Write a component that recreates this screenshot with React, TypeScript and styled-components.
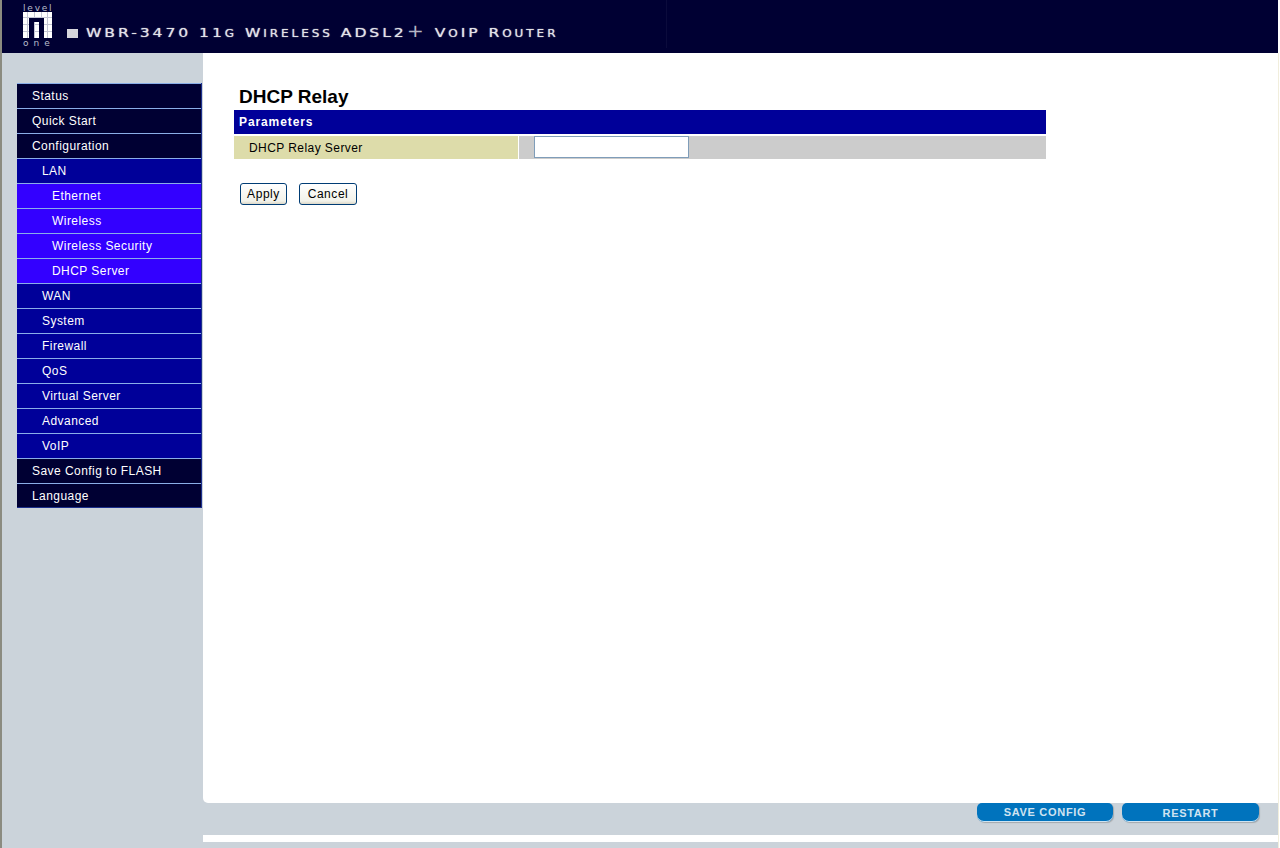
import React from 'react';
import styled, { createGlobalStyle } from 'styled-components';

const menu: { label: string; level: number }[] = [
  { label: 'Status', level: 0 },
  { label: 'Quick Start', level: 0 },
  { label: 'Configuration', level: 0 },
  { label: 'LAN', level: 1 },
  { label: 'Ethernet', level: 2 },
  { label: 'Wireless', level: 2 },
  { label: 'Wireless Security', level: 2 },
  { label: 'DHCP Server', level: 2 },
  { label: 'WAN', level: 1 },
  { label: 'System', level: 1 },
  { label: 'Firewall', level: 1 },
  { label: 'QoS', level: 1 },
  { label: 'Virtual Server', level: 1 },
  { label: 'Advanced', level: 1 },
  { label: 'VoIP', level: 1 },
  { label: 'Save Config to FLASH', level: 0 },
  { label: 'Language', level: 0 },
];

const Logo = () => (
  <LogoBox>
    <LogoWord $spacing={1.8}>level</LogoWord>
    <svg width="29" height="26" viewBox="0 0 29 26">
      <rect width="29" height="26" fill="#fff" />
      <path d="M0 5.5H29M0 12.5H29M0 19.5H29M4.5 0V26M11.5 0V26M18.5 0V26M24.5 0V26" stroke="#c4c6d4" strokeWidth="1" />
      <path d="M6 26V6H21V26H16V10H11V26Z" fill="#000033" />
    </svg>
    <LogoWord $spacing={5}>one</LogoWord>
  </LogoBox>
);

const App = () => {
  return (
    <>
      <GlobalStyle />
      <Page>
        <Header>
          <Logo />
          <Bullet />
          <Title>
            WBR-3470 11<small>G</small> W<small>IRELESS</small> ADSL2<Plus>+</Plus> V<small>O</small>IP R<small>OUTER</small>
          </Title>
        </Header>
        <Body>
          <Sidebar>
            <Menu>
              {menu.map((item) => (
                <MenuItem key={item.label} $level={item.level}>
                  {item.label}
                </MenuItem>
              ))}
            </Menu>
          </Sidebar>
          <Main>
            <Content>
              <Heading>DHCP Relay</Heading>
              <Table>
                <TableHead>Parameters</TableHead>
                <Row>
                  <Label>DHCP Relay Server</Label>
                  <Value>
                    <Input type="text" />
                  </Value>
                </Row>
              </Table>
              <Buttons>
                <Button type="button" $width={47}>Apply</Button>
                <Button type="button" $width={58}>Cancel</Button>
              </Buttons>
            </Content>
            <ActionBar>
              <PillButton $width={136}>SAVE CONFIG</PillButton>
              <PillButton $width={137} $low>RESTART</PillButton>
            </ActionBar>
            <WhiteStrip />
          </Main>
        </Body>
      </Page>
    </>
  );
};

export default App;

const GlobalStyle = createGlobalStyle`
  html, body {
    margin: 0;
    height: 100%;
    overflow: hidden;
    background: #fff;
  }
  #root {
    height: 100%;
  }
`;

const Page = styled.div`
  box-sizing: border-box;
  height: 848px;
  width: 1280px;
  border-left: 2px solid #8b8b80;
  border-right: 1px solid #fff;
  display: flex;
  flex-direction: column;
  font-family: 'Liberation Sans', Arial, sans-serif;
`;

const Header = styled.header`
  flex: 0 0 53px;
  position: relative;
  margin-right: 1px;
  background: #000033;
  display: flex;
  align-items: flex-end;
  padding-left: 21px;
  /* faint seam in the banner image */
  &::after {
    content: '';
    position: absolute;
    left: 664px;
    top: 0;
    bottom: 5px;
    width: 1px;
    background: #0b0b3c;
  }
`;

const LogoBox = styled.div`
  width: 29px;
  margin-bottom: 6px;
  display: flex;
  flex-direction: column;
  svg {
    display: block;
    flex: none;
  }
`;

const LogoWord = styled.span<{ $spacing: number }>`
  font-family: 'DejaVu Sans', sans-serif;
  font-size: 9px;
  line-height: 9px;
  height: 8px;
  letter-spacing: ${({ $spacing }) => $spacing}px;
  color: #b9bccb;
  white-space: nowrap;
  &:last-child {
    height: 9px;
    line-height: 11px;
  }
`;

const Bullet = styled.span`
  width: 11px;
  height: 9px;
  background: #d6d6dc;
  margin: 0 8px 15px 15px;
`;

const Title = styled.h1`
  margin: 0 0 12px;
  font-family: 'DejaVu Sans', sans-serif;
  font-size: 13px;
  line-height: 14px;
  font-weight: 400;
  letter-spacing: 2.45px;
  color: #e2e2e8;
  white-space: nowrap;
  transform: scaleX(1.2);
  transform-origin: left center;
  text-shadow: 0 0 1px #c8c8d4;
  small {
    font-size: 10px;
  }
`;

const Plus = styled.span`
  font-size: 17px;
  line-height: 12px;
  font-weight: 400;
  text-shadow: none;
  color: #b4b4c4;
`;

const Body = styled.div`
  flex: 1;
  display: flex;
  min-height: 0;
  background: #cbd3da;
  border-right: 1px solid #f1eedc;
`;

const Sidebar = styled.nav`
  flex: 0 0 201px;
  padding: 30px 1px 0 15px;
  box-sizing: border-box;
`;

const Menu = styled.div`
  display: flex;
  flex-direction: column;
  border-right: 1px solid #1c2f8c;
`;

const menuColors = ['#000033', '#000099', '#3300ff'];

const MenuItem = styled.a<{ $level: number }>`
  box-sizing: border-box;
  height: 25px;
  border-top: 1px solid #8aaee8;
  background: ${({ $level }) => menuColors[$level]};
  color: #fff;
  font-size: 12px;
  line-height: 24px;
  letter-spacing: 0.45px;
  padding-left: ${({ $level }) => 15 + $level * 10}px;
  white-space: nowrap;
  &:last-child {
    box-shadow: inset 0 -1px 0 #1c2f8c;
  }
`;

const Main = styled.main`
  flex: 1;
  display: flex;
  flex-direction: column;
  min-width: 0;
`;

const Content = styled.section`
  flex: 0 0 750px;
  box-sizing: border-box;
  background: #fff;
  border-bottom-left-radius: 5px;
  padding: 33px 0 0 31px;
`;

const Heading = styled.h2`
  margin: 0 0 3px 5px;
  font-size: 19px;
  line-height: 21px;
  font-weight: 700;
  color: #000;
`;

const Table = styled.div`
  width: 812px;
  display: flex;
  flex-direction: column;
  gap: 2px;
`;

const TableHead = styled.div`
  height: 24px;
  box-sizing: border-box;
  background: #000099;
  color: #fff;
  font-size: 12px;
  font-weight: 700;
  line-height: 25px;
  letter-spacing: 0.9px;
  padding-left: 5px;
`;

const Row = styled.div`
  height: 23px;
  display: flex;
  gap: 1px;
`;

const Label = styled.div`
  flex: 0 0 284px;
  box-sizing: border-box;
  background: #dddcaa;
  color: #000;
  font-size: 12px;
  line-height: 24px;
  letter-spacing: 0.43px;
  padding-left: 15px;
`;

const Value = styled.div`
  flex: 1;
  background: #cccccc;
  padding-left: 15px;
`;

const Input = styled.input`
  display: block;
  box-sizing: border-box;
  width: 155px;
  height: 22px;
  margin: 0;
  padding: 1px 3px;
  border: 1px solid #7f9db9;
  background: #fff;
  outline: none;
`;

const Buttons = styled.div`
  display: flex;
  gap: 12px;
  margin: 24px 0 0 6px;
`;

const Button = styled.button<{ $width: number }>`
  box-sizing: border-box;
  width: ${({ $width }) => $width}px;
  height: 22px;
  padding: 0;
  border: 1px solid #003c74;
  border-radius: 3px;
  background: linear-gradient(#ffffff, #f2f2ea 85%, #dcd8c8);
  color: #000;
  font-family: 'Liberation Sans', Arial, sans-serif;
  font-size: 12px;
  letter-spacing: 0.55px;
`;

const ActionBar = styled.div`
  flex: 0 0 32px;
  display: flex;
  align-items: flex-start;
  gap: 9px;
  padding-left: 774px;
`;

const PillButton = styled.a<{ $width: number; $low?: boolean }>`
  box-sizing: border-box;
  width: ${({ $width }) => $width}px;
  height: 19px;
  background: #0073bd;
  border-radius: 5px 5px 7px 7px;
  box-shadow: 1px 1px 1px #a4a8ac, inset 0 -1px 0 #cfe4f2;
  color: #d0e3f1;
  font-size: 11px;
  font-weight: 700;
  letter-spacing: 0.7px;
  text-align: center;
  line-height: ${({ $low }) => ($low ? 21 : 18)}px;
`;

const WhiteStrip = styled.div`
  flex: 0 0 7px;
  background: #fff;
`;
